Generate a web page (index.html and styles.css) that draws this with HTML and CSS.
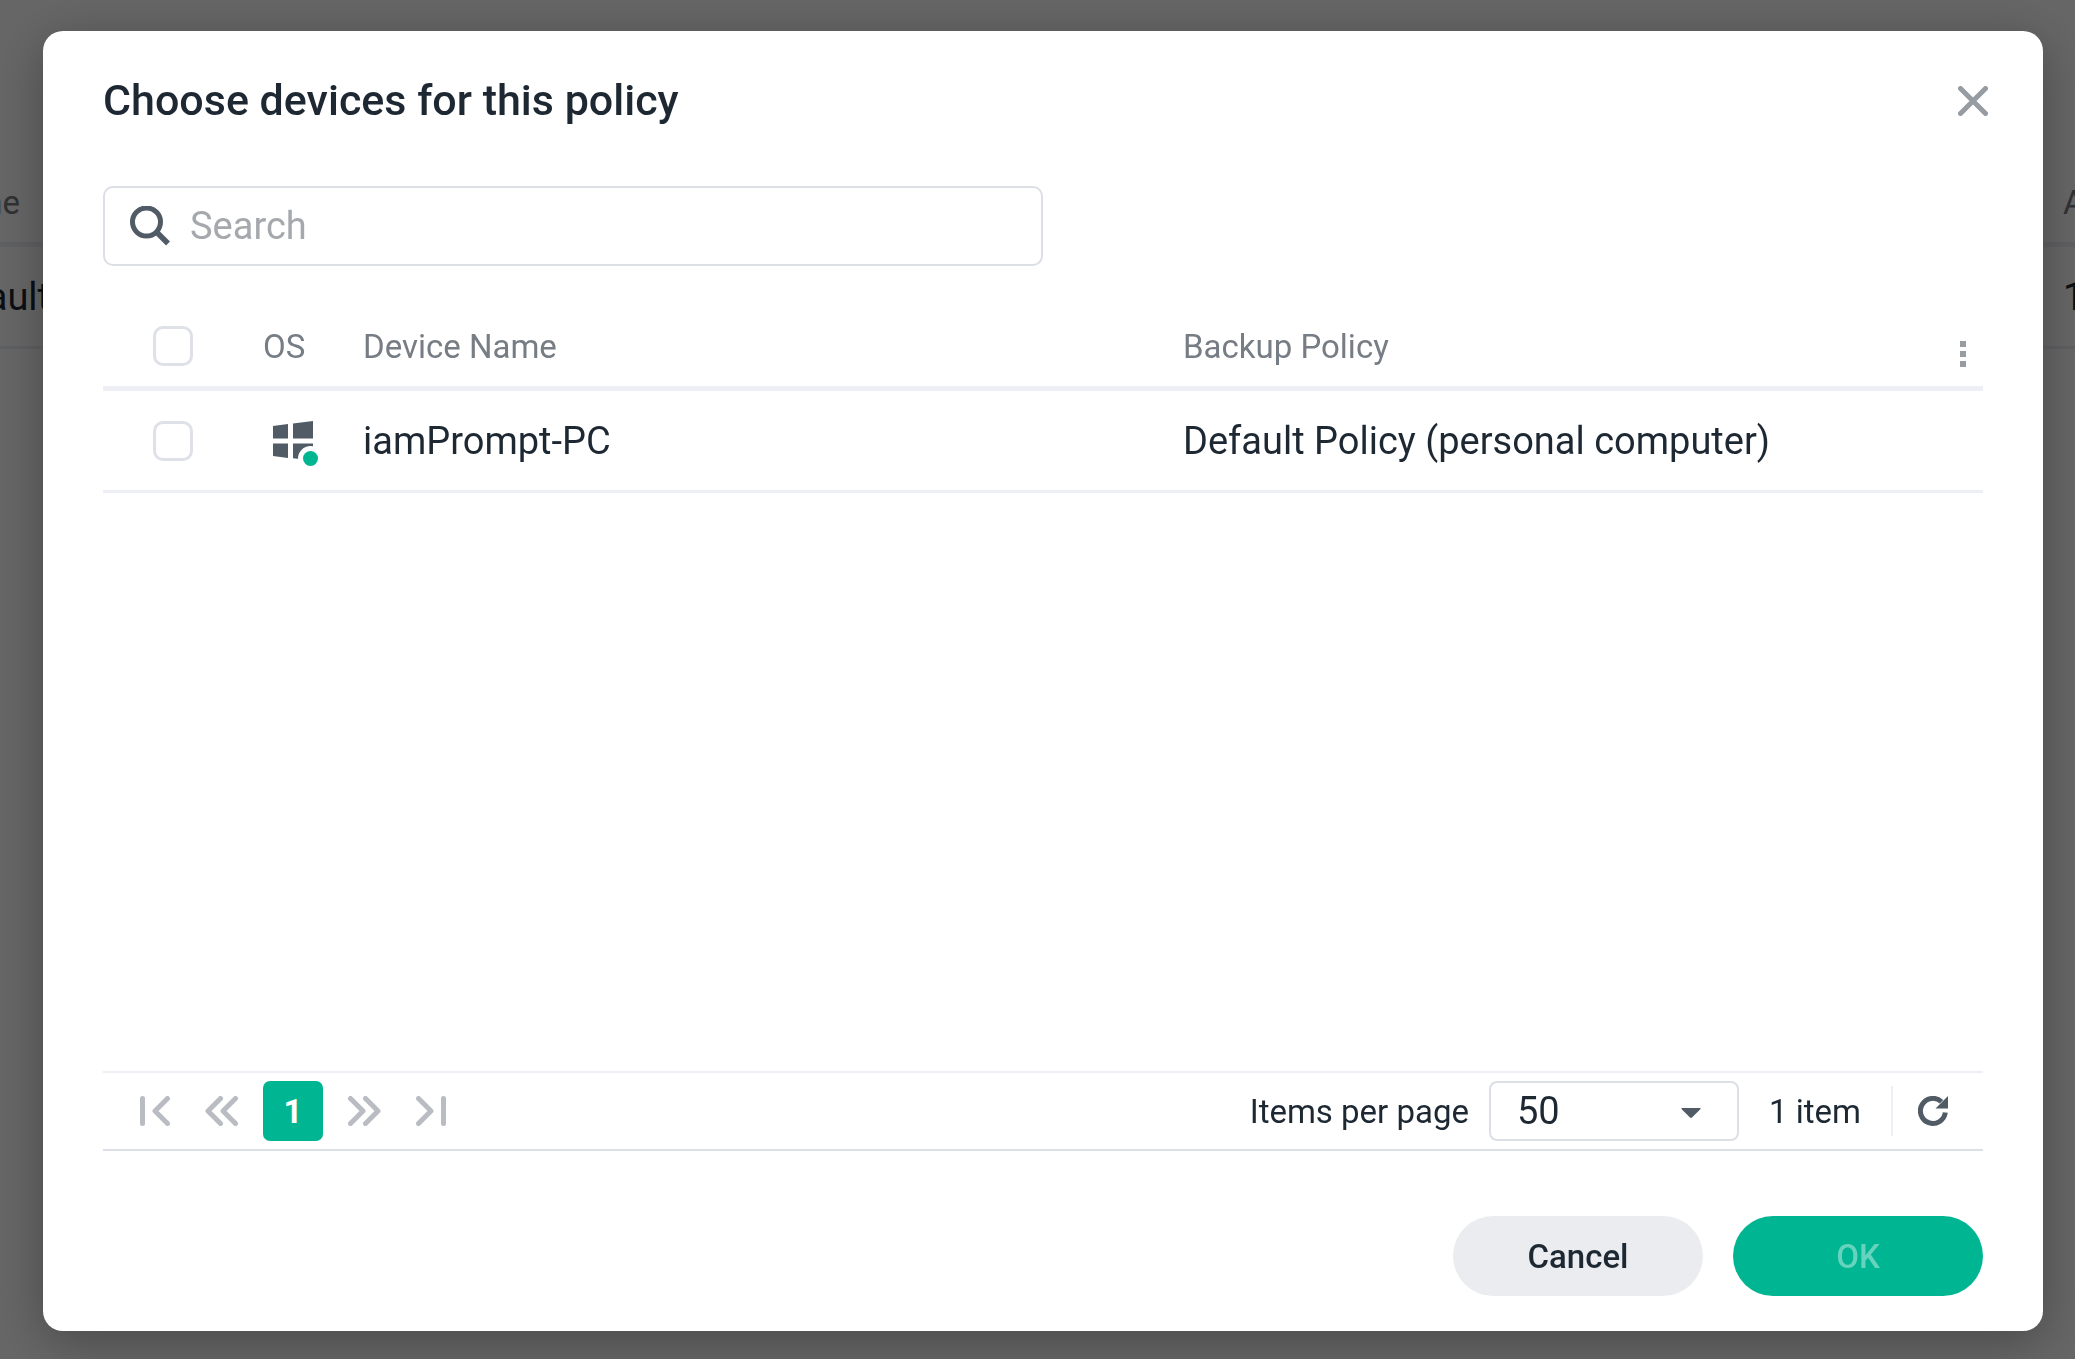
FILE: index.html
```html
<!DOCTYPE html>
<html lang="en">
<head>
<meta charset="utf-8">
<title>Choose devices for this policy</title>
<link rel="stylesheet" href="styles.css">
</head>
<body>
<div class="page" aria-hidden="true">
  <div class="page-row page-head"><span class="page-name">Name</span><span class="page-count">A</span></div>
  <div class="page-row page-item"><span class="page-name page-policy">Default</span><span class="page-count">1</span></div>
</div>
<div class="overlay">
  <main class="dialog" role="dialog" aria-labelledby="dialog-title">
    <header class="dialog-header">
      <h1 id="dialog-title">Choose devices for this policy</h1>
      <button class="icon-button close" type="button" aria-label="Close">
        <svg width="30" height="30" viewBox="0 0 30 30"><path d="M2.5 2.5l25 25M27.5 2.5l-25 25" fill="none" stroke="#969ca2" stroke-width="5" stroke-linecap="round"/></svg>
      </button>
    </header>

    <label class="search">
      <svg width="40" height="40" viewBox="0 0 40 40"><circle cx="16.500" cy="16" r="14" fill="none" stroke="#505b65" stroke-width="5"/><path d="M26.500 26l11.500 11.500" stroke="#505b65" stroke-width="5.500"/></svg>
      <input type="text" placeholder="Search" aria-label="Search">
    </label>

    <div class="table-area">
      <table class="devices">
        <colgroup><col class="col-check"><col class="col-os"><col class="col-name"><col class="col-policy"><col class="col-menu"></colgroup>
        <thead>
          <tr>
            <th class="check"><input type="checkbox" aria-label="Select all devices"></th>
            <th>OS</th>
            <th>Device Name</th>
            <th>Backup Policy</th>
            <th class="menu">
              <button class="icon-button" type="button" aria-label="Columns">
                <svg width="6" height="26" viewBox="0 0 6 26" fill="#969ca2"><path d="M0 0h6v6H0zM0 10h6v6H0zM0 20h6v6H0z"/></svg>
              </button>
            </th>
          </tr>
        </thead>
        <tbody>
          <tr>
            <td class="check"><input type="checkbox" aria-label="Select iamPrompt-PC"></td>
            <td class="os">
              <svg role="img" aria-label="Windows, online" width="46" height="46" viewBox="0 0 46 46"><path fill="#505b65" d="M0 5l15-2v14.500H0zM20 2.400L40 0v17.500H20zM0 22.500h15V37L0 35zM20 22.500h20v17L20 37.200z"/><circle cx="37.500" cy="37.500" r="12.500" fill="#fff"/><circle cx="37.500" cy="37.500" r="7.500" fill="#00b592"/></svg>
            </td>
            <td>iamPrompt-PC</td>
            <td colspan="2">Default Policy (personal computer)</td>
          </tr>
        </tbody>
      </table>
    </div>

    <div class="pager">
      <nav class="pages" aria-label="Pages">
        <button class="icon-button" type="button" aria-label="First page"><svg width="34" height="30" viewBox="0 0 34 30"><path d="M3.500 2.500v25M28.500 2.500L16 15l12.500 12.500"/></svg></button>
        <button class="icon-button" type="button" aria-label="Previous page"><svg width="34" height="30" viewBox="0 0 34 30"><path d="M15.500 2.500L3 15l12.500 12.500M30.500 2.500L18 15l12.500 12.500"/></svg></button>
        <button class="page-number" type="button" aria-current="page">1</button>
        <button class="icon-button" type="button" aria-label="Next page"><svg width="34" height="30" viewBox="0 0 34 30"><path d="M3.500 2.500L16 15 3.500 27.500M18.500 2.500L31 15 18.500 27.500"/></svg></button>
        <button class="icon-button" type="button" aria-label="Last page"><svg width="34" height="30" viewBox="0 0 34 30"><path d="M5.500 2.500L18 15 5.500 27.500M30.500 2.500v25"/></svg></button>
      </nav>
      <label for="page-size">Items per page</label>
      <div class="select">
        <select id="page-size"><option>50</option></select>
        <svg width="20" height="10" viewBox="0 0 20 10"><path d="M1 0h18q1 .5 .3 1.300l-8.300 8.200q-1 .8-2 0L.7 1.300Q0 .5 1 0z" fill="#505b65"/></svg>
      </div>
      <span class="total">1 item</span>
      <button class="icon-button refresh" type="button" aria-label="Refresh">
        <svg width="30" height="30" viewBox="0 0 30 30"><path d="M27.300 16.500A12.500 12.500 0 1 1 23.500 5.800" fill="none" stroke="#505b65" stroke-width="5"/><path d="M30 0v12.500H17.500z" fill="#505b65"/></svg>
      </button>
    </div>

    <footer class="actions">
      <button class="button secondary" type="button">Cancel</button>
      <button class="button primary" type="button" disabled>OK</button>
    </footer>
  </main>
</div>
</body>
</html>
```
FILE: styles.css
```css
* { box-sizing: border-box; }

html, body { height: 100%; }

body {
  margin: 0;
  overflow: hidden;
  font-family: Roboto, "Liberation Sans", sans-serif;
  font-size: 38px;
  color: #1d2833;
  background: #fff;
}

button, input, select { font: inherit; color: inherit; }

svg { display: block; }

/* Policy list behind the dialog */
.page { padding-top: 162px; }
.page-row { display: flex; justify-content: space-between; align-items: center; }
.page-head { height: 85px; border-bottom: 5px solid #eeeff4; font-size: 33px; color: #777d84; }
.page-item { height: 102px; border-bottom: 3px solid #eeeff4; }
.page-name { width: 20px; display: flex; justify-content: flex-end; white-space: nowrap; }
.page-policy { width: 50px; }
.page-count { width: 12px; }

.overlay {
  position: fixed;
  inset: 0;
  display: flex;
  padding: 31px 32px 28px 43px;
  background: rgba(0, 0, 0, 0.6);
}

.dialog {
  flex: 1;
  display: flex;
  flex-direction: column;
  padding: 30px 60px 35px;
  border-radius: 20px;
  background: #fff;
  box-shadow: 0 10px 50px rgba(0, 0, 0, 0.3);
}

.dialog-header { display: flex; justify-content: space-between; align-items: center; height: 80px; }
.dialog-header h1 { margin: 0; padding-bottom: 2px; font-size: 43px; font-weight: 500; }

.icon-button { display: flex; padding: 0; border: 0; background: none; }
.close { margin-right: -5px; }

.search {
  display: flex;
  align-items: center;
  gap: 20px;
  width: 940px;
  height: 80px;
  margin-top: 45px;
  padding: 0 25px;
  border: 2px solid #dcdfe6;
  border-radius: 10px;
}
.search input { flex: 1; min-width: 0; padding: 0; border: 0; outline: 0; background: none; }
.search input::placeholder { color: #a5a9ad; opacity: 1; }

.table-area { flex: 1; margin-top: 40px; }
.devices { width: 100%; table-layout: fixed; border-collapse: separate; border-spacing: 0; text-align: left; }
.col-check { width: 160px; }
.col-os { width: 100px; }
.col-name { width: 820px; }
.col-menu { width: 60px; }
.devices th { height: 85px; padding: 0; border-bottom: 5px solid #eeeff4; font-size: 33px; font-weight: 400; color: #777d84; }
.devices td { height: 102px; padding: 0; border-bottom: 3px solid #eeeff4; }
.devices .check { padding-left: 50px; }
.devices .os { padding: 6px 0 0 10px; }
.devices .menu { padding: 15px 0 0 37px; }

.check input {
  appearance: none;
  display: block;
  width: 40px;
  height: 40px;
  margin: 0;
  border: 3px solid #dfe1e9;
  border-radius: 10px;
  background: #fff;
}

.pager {
  display: flex;
  align-items: center;
  height: 80px;
  padding-right: 35px;
  border-top: 2px solid #eeeff4;
  border-bottom: 2px solid #dcdfe6;
  font-size: 33px;
}
.pages { display: flex; flex: 1; align-items: center; gap: 32px; padding-left: 36px; }
.pages path { fill: none; stroke: #b9bcc2; stroke-width: 5; stroke-linecap: round; stroke-linejoin: round; }
.page-number { width: 60px; height: 60px; margin: 0 -8px; padding: 0; border: 0; border-radius: 7px; background: #00b592; color: #fff; font-weight: 700; }

.select { position: relative; width: 250px; height: 60px; margin: 0 30px 0 20px; }
.select select {
  appearance: none;
  width: 100%;
  height: 100%;
  padding: 0 26px;
  border: 2px solid #dcdfe6;
  border-radius: 8px;
  background: #fff;
  font-size: 38px;
}
.select svg { position: absolute; top: 27px; right: 38px; pointer-events: none; }

.refresh { align-items: center; height: 50px; margin-left: 30px; padding-left: 25px; border-left: 2px solid #eeeff4; }

.actions { display: flex; justify-content: flex-end; gap: 30px; margin-top: 65px; }
.button { width: 250px; height: 80px; padding: 0; border: 0; border-radius: 40px; font-size: 33px; font-weight: 500; }
.secondary { background: #ebecf0; }
.primary { background: #00b592; color: #66d3be; }
```
